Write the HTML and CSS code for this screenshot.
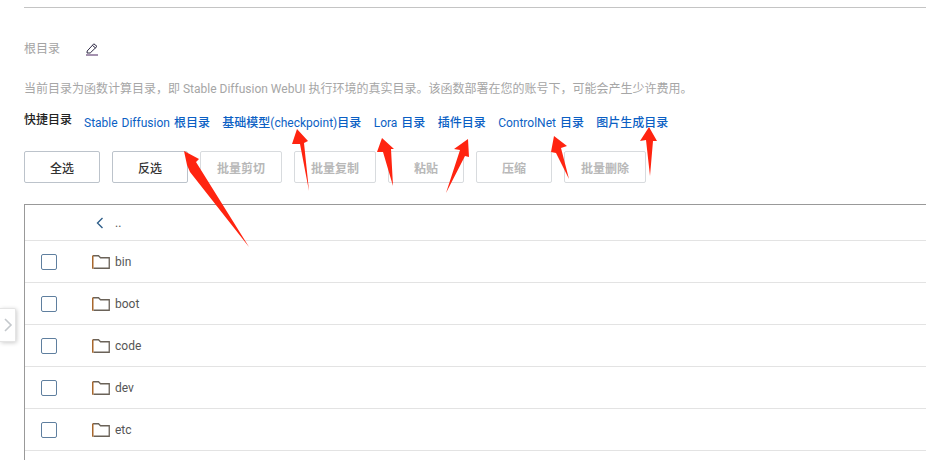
FILE: index.html
```html
<!DOCTYPE html>
<html lang="zh-CN">
<head>
<meta charset="utf-8">
<title>根目录</title>
<link rel="stylesheet" href="styles.css">
</head>
<body>
<main class="page">
  <div class="topline"></div>
  <div class="rootline">
    <span class="rootlabel">根目录</span>
    <svg class="edit" width="14" height="14" viewBox="0 0 14 14"><path d="M2.2 9 L8.8 1.8 L12 4.4 L5.2 11 L2 11 Z M7.4 3.4 L10.6 6" fill="none" stroke="#2f2a45" stroke-width="1"/><path d="M1 13 H13" stroke="#4a2560" stroke-width="1"/></svg>
  </div>
  <p class="desc">当前目录为函数计算目录，即 Stable Diffusion WebUI 执行环境的真实目录。该函数部署在您的账号下，可能会产生少许费用。</p>
  <div class="quick">
    <span class="quicklabel">快捷目录</span>
    <a class="link">Stable Diffusion <b class="zh">根目录</b></a>
    <a class="link"><b class="zh">基础模型</b>(checkpoint)<b class="zh">目录</b></a>
    <a class="link">Lora <b class="zh">目录</b></a>
    <a class="link"><b class="zh">插件目录</b></a>
    <a class="link">ControlNet <b class="zh">目录</b></a>
    <a class="link"><b class="zh">图片生成目录</b></a>
  </div>
  <div class="actions">
    <button class="btn">全选</button>
    <button class="btn">反选</button>
    <button class="btn wide off">批量剪切</button>
    <button class="btn wide off">批量复制</button>
    <button class="btn off">粘贴</button>
    <button class="btn off">压缩</button>
    <button class="btn wide off">批量删除</button>
  </div>
  <div class="table">
    <div class="row head">
      <span class="cell-check"></span>
      <svg class="back" width="18" height="16" viewBox="0 0 18 16"><path d="M10.5 3 L5.5 8 L10.5 13" fill="none" stroke="#2f5f8a" stroke-width="1.4"/></svg>
      <span class="name">..</span>
    </div>
    <div class="row"><span class="cell-check"><span class="check"></span></span><svg class="folder" width="18" height="16" viewBox="0 0 18 16"><path d="M1.5 14.25 H17.25 V3.75 H8.5 L6.5 1.75 H1" fill="#fff" stroke="#6a6258" stroke-width="1.3"/><path d="M.75 1.5 V14.75" stroke="#a8672c" stroke-width="1.5"/></svg><span class="name">bin</span></div>
    <div class="row"><span class="cell-check"><span class="check"></span></span><svg class="folder" width="18" height="16" viewBox="0 0 18 16"><path d="M1.5 14.25 H17.25 V3.75 H8.5 L6.5 1.75 H1" fill="#fff" stroke="#6a6258" stroke-width="1.3"/><path d="M.75 1.5 V14.75" stroke="#a8672c" stroke-width="1.5"/></svg><span class="name">boot</span></div>
    <div class="row"><span class="cell-check"><span class="check"></span></span><svg class="folder" width="18" height="16" viewBox="0 0 18 16"><path d="M1.5 14.25 H17.25 V3.75 H8.5 L6.5 1.75 H1" fill="#fff" stroke="#6a6258" stroke-width="1.3"/><path d="M.75 1.5 V14.75" stroke="#a8672c" stroke-width="1.5"/></svg><span class="name">code</span></div>
    <div class="row"><span class="cell-check"><span class="check"></span></span><svg class="folder" width="18" height="16" viewBox="0 0 18 16"><path d="M1.5 14.25 H17.25 V3.75 H8.5 L6.5 1.75 H1" fill="#fff" stroke="#6a6258" stroke-width="1.3"/><path d="M.75 1.5 V14.75" stroke="#a8672c" stroke-width="1.5"/></svg><span class="name">dev</span></div>
    <div class="row"><span class="cell-check"><span class="check"></span></span><svg class="folder" width="18" height="16" viewBox="0 0 18 16"><path d="M1.5 14.25 H17.25 V3.75 H8.5 L6.5 1.75 H1" fill="#fff" stroke="#6a6258" stroke-width="1.3"/><path d="M.75 1.5 V14.75" stroke="#a8672c" stroke-width="1.5"/></svg><span class="name">etc</span></div>
    <div class="row tail"></div>
  </div>
</main>
<button class="toggle"><svg width="10" height="16" viewBox="0 0 10 16"><path d="M2 2 L8 8 L2 14" fill="none" stroke="#c4c8cc" stroke-width="1.6"/></svg></button>
<svg class="arrows" width="926" height="460" viewBox="0 0 926 460">
  <g fill="#ff2410">
    <polygon points="184,151 199,159 196,162 249,247 190,172 187,165"/>
    <polygon points="297,129 308,141 304,143 309,191 300,144 292,144"/>
    <polygon points="382,138 394,149 391,149 393,186 383,152 377,152"/>
    <polygon points="468,139 469,157 465,156 446,193 460,150 454,149"/>
    <polygon points="554,136 567,146 561,148 569,179 556,153 551,152"/>
    <polygon points="649,127 657,141 653,141 650,176 646,140 640,141"/>
  </g>
</svg>
</body>
</html>
```
FILE: styles.css
```css
* { box-sizing: border-box; }
html, body { margin: 0; padding: 0; height: 460px; overflow: hidden; background: #fff; }
body {
  font-family: Roboto, "Noto Sans CJK SC", sans-serif;
  font-size: 12px;
  color: #333;
}
.page { padding: 7px 0 0 24px; }
.topline { height: 1px; background: #c4c4c4; }
.rootline { display: flex; align-items: center; height: 16px; margin-top: 33px; }
.rootlabel { color: #a3a3a3; line-height: 16px; width: 61px; }
.edit { display: block; }
.desc { margin: 24px 0 0; height: 16px; line-height: 16px; color: #a6a6a6; white-space: nowrap; }
.quick { display: flex; margin-top: 15px; height: 18px; white-space: nowrap; }
.quicklabel { width: 60px; font-weight: 500; color: #222; line-height: 16px; }
.link { color: #0b5fc4; line-height: 22px; margin-right: 12.4px; word-spacing: 1px; }
.zh { font-weight: 500; }
.actions { display: flex; gap: 12px; margin-top: 21px; }
.btn {
  width: 76px; height: 32px; padding: 0;
  background: #fff; border: 1px solid #bcc3cb; border-radius: 2px;
  font: 500 12px Roboto, "Noto Sans CJK SC", sans-serif;
  color: #333;
}
.wide { width: 82px; }
.off { color: #b8b8b8; border-color: #d8dbde; font-weight: 700; }
.table { margin-top: 21px; border-top: 1px solid #999; border-left: 1px solid #999; }
.row { display: flex; align-items: center; height: 42px; border-bottom: 1px solid #e3e3e3; }
.head { height: 36px; }
.tail { height: 9px; border-bottom: 0; }
.cell-check { width: 67px; padding-left: 16px; display: flex; flex: none; }
.check { width: 16px; height: 16px; border: 1px solid #5f7f9f; border-radius: 2px; }
.folder, .back { flex: none; display: block; }
.name { margin-left: 5px; color: #555; }
.toggle {
  position: absolute; left: 0; top: 308px; width: 16px; height: 34px; padding: 0;
  background: #fff; border: 1px solid #e4e4e4; border-left: 0; border-radius: 0 2px 2px 0;
  box-shadow: 1px 1px 4px rgba(0,0,0,.2);
  display: flex; align-items: center; justify-content: center;
}
.arrows { position: absolute; left: 0; top: 0; pointer-events: none; }
```
